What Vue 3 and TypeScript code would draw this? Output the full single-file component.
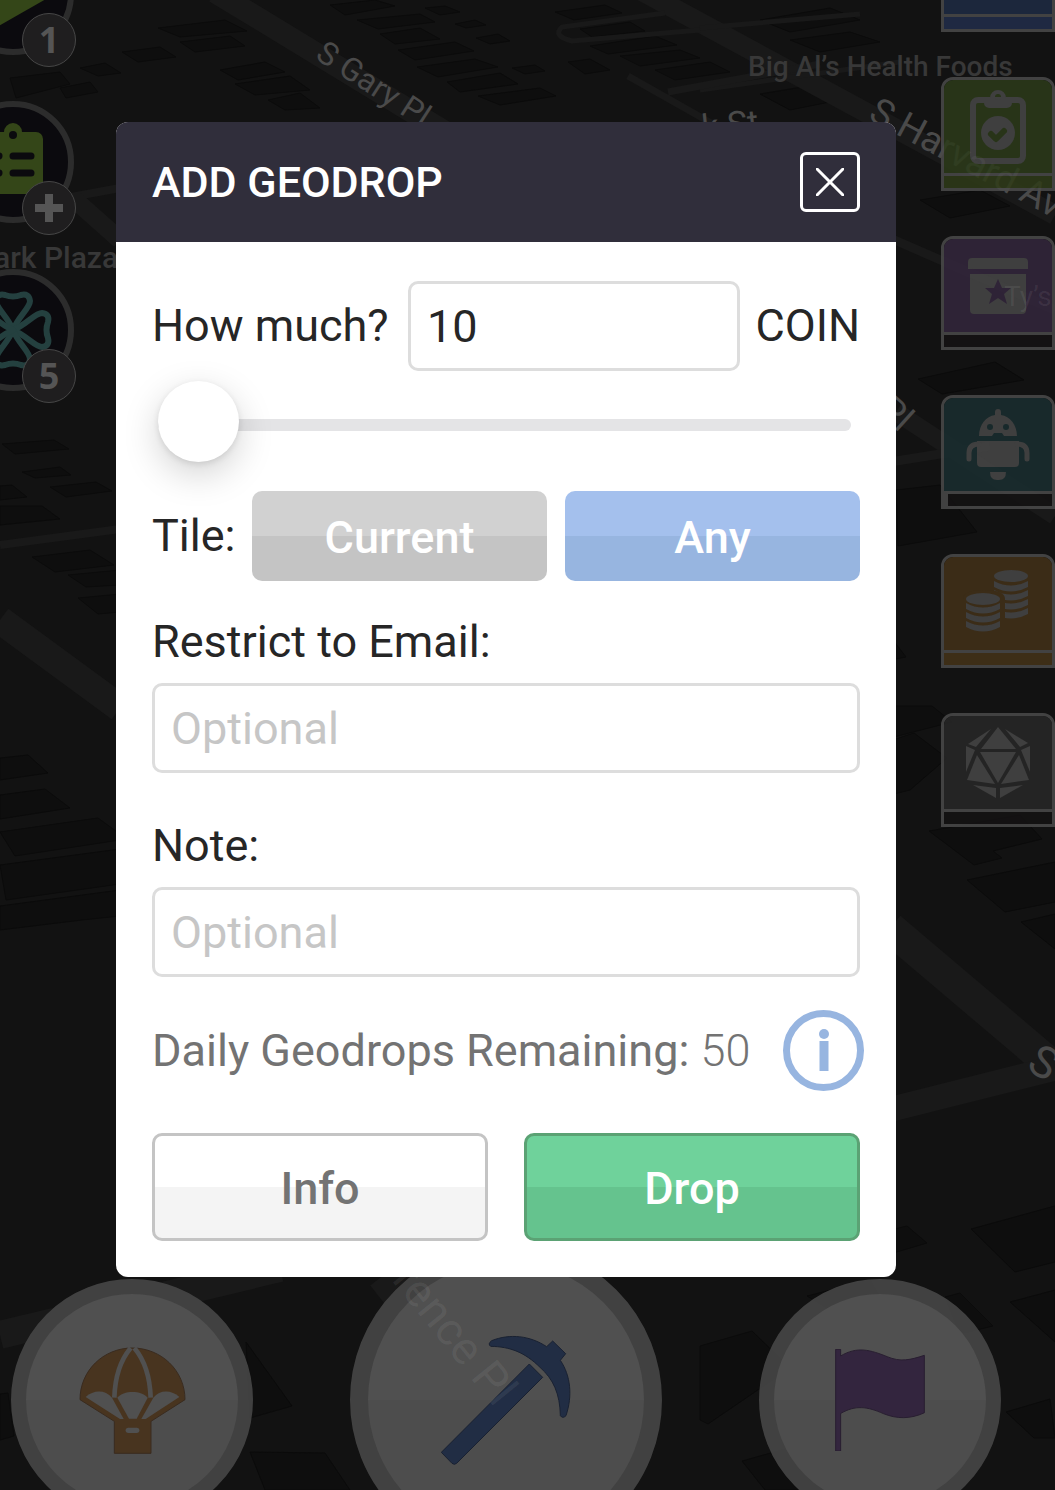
<script setup lang="ts">
import { ref } from 'vue'

interface Card {
  name: string
  color: string
  footer: string
  progress?: boolean
}

const cards: Card[] = [
  { name: 'shop', color: '#1e2b44', footer: '#222e4b' },
  { name: 'tasks', color: '#2c3b1a', footer: '#2f3b18' },
  { name: 'store', color: '#34273d', footer: '#151314' },
  { name: 'robot', color: '#1a2e30', footer: '#141213', progress: true },
  { name: 'coins', color: '#433118', footer: '#453318' },
  { name: 'dice', color: '#282828', footer: '#141213' }
]

const quests = [
  { name: 'play', badge: '1' },
  { name: 'list', badge: '+' },
  { name: 'clover', badge: '5' }
]

const blocks: string[] = [
  '158,28 225,20 247,31 180,37', '180,42 230,36 245,46 195,52', '220,70 265,62 285,72 238,80',
  '122,52 160,47 176,57 138,62', '80,68 105,63 121,73 98,76', '10,78 60,72 70,84 16,98',
  '235,84 290,76 310,90 255,95', '268,100 300,93 320,108 285,110', '60,88 90,82 98,92 66,98',
  '330,5 375,0 395,6 345,15', '357,20 420,14 435,22 378,29', '380,34 420,28 440,39 395,44',
  '398,50 455,42 474,51 415,60', '417,67 475,59 498,67 438,77', '447,82 500,73 518,84 460,92',
  '478,96 540,88 556,96 500,105', '425,8 445,6 460,12 440,15', '455,24 475,20 486,25 466,28',
  '476,38 498,34 510,41 490,44', '512,68 535,65 545,71 525,74', '555,12 605,5 622,13 574,20',
  '580,29 630,22 645,31 592,37', '590,46 655,36 677,45 608,54', '620,56 680,50 700,58 640,66',
  '655,70 710,62 730,72 675,80', '568,62 590,59 610,70 585,74', '760,20 830,8 860,20 790,32',
  '790,40 850,32 880,42 820,52', '760,94 820,84 850,98 790,110', '920,200 980,190 1010,206 950,218',
  '2,444 54,440 69,449 15,454', '22,472 60,467 71,475 35,478', '50,487 96,482 112,491 66,497',
  '0,486 12,485 27,497 0,500', '0,506 42,506 60,519 0,525', '32,557 90,550 114,565 55,572',
  '68,575 120,570 120,585 86,587', '78,598 120,594 120,612 98,614', '0,758 28,755 48,773 0,780',
  '0,795 45,789 70,808 0,819', '0,832 98,818 120,834 120,840 15,856', '0,865 120,849 120,884 6,900',
  '0,906 120,890 120,916 82,920 0,930', '929,831 1020,815 1042,839 993,851 1002,858 974,865',
  '967,880 1055,862 1055,902 1005,912', '1021,922 1055,914 1055,949', '890,1230 907,1226 927,1243 890,1254',
  '971,1229 1055,1206 1055,1262 1015,1272', '918,379 995,362 1024,380 942,394', '896,490 940,485 977,532 898,546',
  '890,636 906,657 890,660', '890,706 932,706 952,722 890,738', '890,741 914,733 947,758 910,790 890,795',
  '700,1346 752,1331 790,1368 708,1424 700,1420', '807,1296 870,1280 880,1297 830,1310',
  '945,1297 960,1293 993,1326 960,1334', '1010,1302 1055,1290 1055,1342', '1006,1412 1050,1399 1055,1438 1034,1438',
  '742,1461 800,1445 840,1490 765,1490', '246,1342 292,1406 250,1418', '250,1452 325,1453 350,1490 265,1490',
  '0,1394 8,1393 14,1436 0,1440'
]

const amount = ref('10')
const slider = ref(0)
const tile = ref('any')
const email = ref('')
const note = ref('')
const disc = (x: number, y: number): string => `M${x} ${y}q17 9 34 0v6q-17 9-34 0z`
</script>

<template>
  <div class="screen">
    <svg class="map" viewBox="0 0 1055 1490" preserveAspectRatio="xMidYMid slice" aria-hidden="true">
      <g class="blocks">
        <polygon v-for="b in blocks" :key="b" :points="b" />
      </g>
      <g class="roads">
        <path d="M215-8L450 135" stroke-width="22" />
        <path d="M640-10L1055 215" stroke-width="20" />
        <path d="M0 210L120 188M0 545L120 529" stroke-width="8" />
        <path d="M75 200L120 240" stroke-width="18" />
        <path d="M0 620L120 708" stroke-width="28" />
        <path d="M700 28L860 14M700 90L900 62" stroke-width="5" />
        <path d="M665 13L562 27Q552 36 572 41L700 30" stroke-width="5" />
        <path d="M628 76L720 128M668 92L820 64" stroke-width="7" />
        <path d="M890 238L1055 310" stroke-width="9" />
        <path d="M896 412L1055 516" stroke-width="18" />
        <path d="M890 462L990 446" stroke-width="9" />
        <path d="M890 928L1055 1068" stroke-width="32" />
        <path d="M880 1112L1055 1068" stroke-width="25" />
        <path d="M0 1335L280 1268" stroke-width="28" />
        <path d="M390 1270L570 1500" stroke-width="50" />
      </g>
      <g class="labels">
        <text transform="translate(314 58) rotate(33)" font-size="32">S Gary Pl</text>
        <text transform="translate(703 139) rotate(-6)" font-size="34">k St</text>
        <text transform="translate(867 119) rotate(28)" font-size="37">S Harvard Ave</text>
        <text transform="translate(876 412) rotate(42)" font-size="36">Pl</text>
        <text transform="translate(1025 1069) rotate(30)" font-size="44">S</text>
        <g class="places">
          <text x="748" y="76" font-size="28">Big Al’s Health Foods</text>
          <text x="-6" y="268" font-size="30">ark Plaza</text>
        </g>
      </g>
    </svg>

    <div class="quests">
      <div v-for="q in quests" :key="q.name" class="quest">
        <svg viewBox="0 0 110 110" aria-hidden="true">
          <path v-if="q.name === 'play'" d="M30 25L88 54a4 4 0 0 1 0 6L30 93Z" fill="#344618" />
          <template v-else-if="q.name === 'list'">
            <path d="M33 25H46a9 9 0 0 1 18 0H78a7 7 0 0 1 7 7V87H25V32a7 7 0 0 1 8-7Z" fill="#344618" />
            <circle cx="55" cy="28" r="4" fill="#0b0a0e" />
            <path d="M55 49H73M55 66H73M41 49h0M41 66h0" stroke="#0b0a0e" stroke-width="7" stroke-linecap="round" />
          </template>
          <g v-else fill="none" stroke="#24403f" stroke-width="6" stroke-linejoin="round">
            <path
              v-for="a in [0, 90, 180, 270]"
              :key="a"
              :transform="`rotate(${a} 55 55)`"
              d="M55 55C50 42 38 33 38 26Q39 18 47 20Q55 23 63 20Q71 18 72 26C72 33 60 42 55 55Z"
            />
          </g>
        </svg>
        <span class="badge">
          <svg v-if="q.badge === '+'" class="plus" viewBox="0 0 28 28" aria-label="Add">
            <path d="M14 0V28M0 14H28" stroke="#555" stroke-width="8" />
          </svg>
          <template v-else>{{ q.badge }}</template>
        </span>
      </div>
    </div>

    <div class="cards">
      <div v-for="c in cards" :key="c.name" class="card">
        <div class="face" :style="{ background: c.color }">
          <svg viewBox="0 0 108 93" aria-hidden="true">
            <g v-if="c.name === 'tasks'">
              <rect x="29" y="20" width="50" height="61" rx="5" fill="none" stroke="#474747" stroke-width="6" />
              <path
                fill="#474747"
                fill-rule="evenodd"
                d="M40 18H46a8 8 0 0 1 16 0H68V23a5 5 0 0 1-5 5H45a5 5 0 0 1-5-5ZM54 14a3 3 0 1 0 0 6a3 3 0 0 0 0-6Z"
              />
              <circle cx="54" cy="53" r="17" fill="#474747" />
              <path d="M47 54L52 59L60 51" fill="none" :stroke="c.color" stroke-width="6" stroke-linecap="round" stroke-linejoin="round" />
            </g>
            <g v-else-if="c.name === 'store'">
              <path d="M24 30V23a4 4 0 0 1 4-4H80a4 4 0 0 1 4 4V30ZM26 35H82V71a4 4 0 0 1-4 4H30a4 4 0 0 1-4-4Z" fill="#474747" />
              <path d="M54 40l4 9h9l-7 6 3 10-9-6-9 6 3-10-7-6h9Z" :fill="c.color" />
            </g>
            <g v-else-if="c.name === 'robot'">
              <path d="M35 38C35 27 42 18 51 17V14a3 3 0 0 1 6 0V17C66 18 73 27 73 38H60L58 35H50L48 38Z" fill="#474747" />
              <circle cx="46" cy="29" r="3" :fill="c.color" />
              <circle cx="62" cy="29" r="3" :fill="c.color" />
              <path d="M33 43H75V65a4 4 0 0 1-4 4H37a4 4 0 0 1-4-4ZM46 74H62Q62 82 55 82H53Q46 82 46 74Z" fill="#474747" />
              <path d="M35 46Q25 46 25 55V61M73 46Q83 46 83 55V61" fill="none" stroke="#474747" stroke-width="5" stroke-linecap="round" />
            </g>
            <g v-else-if="c.name === 'coins'" fill="#474747">
              <ellipse cx="67" cy="19" rx="17" ry="6" />
              <path v-for="y in [24, 33, 42, 51]" :key="y" :d="disc(50, y)" />
              <path d="M19 42Q19 33 40 33T61 42V75H19Z" :fill="c.color" />
              <ellipse cx="39" cy="42" rx="17" ry="6" />
              <path v-for="y in [46, 55, 64]" :key="y" :d="disc(22, y)" />
            </g>
            <path
              v-else-if="c.name === 'dice'"
              fill="#474747"
              d="M54 11L37 33H72ZM47 13L24 28L32 31ZM61 13L84 27L76 31ZM22 30L31 34L22 56ZM86 30L77 34L86 56ZM36 36H72L54 67ZM33 39L23 64L51 68ZM75 39L85 64L57 68ZM29 69L52 72V82ZM79 69L56 72V82Z"
            />
          </svg>
        </div>
        <div class="meter" :class="{ started: c.progress }" :style="{ background: c.footer }"></div>
      </div>
    </div>

    <nav class="dock">
      <button class="round" aria-label="Geodrop">
        <svg viewBox="237 259 321 321" width="107" height="107" aria-hidden="true">
          <path d="M240 417C240 330 310 262 397 262S555 330 555 417L453 482V578H343V482Z" fill="#4a3520" stroke="#3a2c20" stroke-width="3" />
          <g fill="#525252">
            <path d="M257 409C280 388 315 386 336 411L371 475H360Z" />
            <path d="M352 411C370 388 425 388 443 411L410 474H387Z" />
            <path d="M538 409C515 388 480 386 460 411L424 475H437Z" />
            <rect x="377" y="501" width="41" height="16" rx="8" />
          </g>
          <path d="M392 262C360 300 345 350 343 411M403 262C435 300 450 350 452 411" fill="none" stroke="#525252" stroke-width="14" />
        </svg>
      </button>
      <button class="round large" aria-label="Mine">
        <svg viewBox="303 223 390 390" width="130" height="130" aria-hidden="true">
          <g fill="#222e46" stroke="#1a2232" stroke-width="3">
            <path d="M568 310L608 350L350 608Q343 614 336 608L304 575Z" />
            <path d="M455 240C510 218 570 225 620 258L638 241L677 279L661 299C692 345 698 405 678 465Q668 475 661 465C660 400 640 355 600 320C555 275 510 258 452 257Q442 250 455 240Z" />
          </g>
        </svg>
      </button>
      <button class="round" aria-label="Flag">
        <svg viewBox="404 267 269 307" width="90" height="102" aria-hidden="true">
          <path d="M405 268H420V288C470 258 510 270 560 290C600 307 630 300 672 286V459C630 478 590 478 550 462C500 440 465 435 420 461V574H405Z" fill="#34263f" stroke="#291f31" stroke-width="3" />
        </svg>
      </button>
    </nav>

    <svg class="map glow" viewBox="0 0 1055 1490" preserveAspectRatio="xMidYMid slice" aria-hidden="true">
      <text transform="translate(391 1280) rotate(51)" font-size="46">rence Pl</text>
      <text x="1004" y="306" font-size="28">Ty’s</text>
    </svg>

    <main class="stage">
      <section class="dialog" role="dialog" aria-labelledby="dialog-title">
        <header class="head">
          <h1 id="dialog-title">ADD GEODROP</h1>
          <button class="close" aria-label="Close">
            <svg viewBox="0 0 28 28" width="28" height="28" aria-hidden="true">
              <path d="M1 1L27 27M27 1L1 27" stroke="#fff" stroke-width="3" stroke-linecap="round" />
            </svg>
          </button>
        </header>
        <form class="body" @submit.prevent>
          <div class="amount">
            <label for="amount">How much?</label>
            <input id="amount" v-model="amount" class="field" type="text" />
            <span class="unit">COIN</span>
          </div>
          <input v-model="slider" class="slider" type="range" min="0" max="100" aria-label="Amount" />
          <div class="tiles">
            <span>Tile:</span>
            <button type="button" class="tile grey" :aria-pressed="tile === 'current'" @click="tile = 'current'">Current</button>
            <button type="button" class="tile blue" :aria-pressed="tile === 'any'" @click="tile = 'any'">Any</button>
          </div>
          <div class="group">
            <label for="email">Restrict to Email:</label>
            <input id="email" v-model="email" class="field" type="text" placeholder="Optional" />
          </div>
          <div class="group note">
            <label for="note">Note:</label>
            <input id="note" v-model="note" class="field" type="text" placeholder="Optional" />
          </div>
          <div class="remaining">
            <span>Daily Geodrops Remaining: <span class="count">50</span></span>
            <button type="button" class="help" aria-label="About daily geodrops">
              <svg viewBox="0 0 81 81" width="81" height="81" aria-hidden="true">
                <circle cx="40.5" cy="40.5" r="37" fill="none" stroke="#97b5e0" stroke-width="7" />
                <circle cx="41" cy="24" r="5" fill="#97b5e0" />
                <path d="M41 31V61" stroke="#97b5e0" stroke-width="9" />
              </svg>
            </button>
          </div>
          <div class="actions">
            <button type="button" class="action info">Info</button>
            <button type="submit" class="action drop">Drop</button>
          </div>
        </form>
      </section>
    </main>
  </div>
</template>

<style>
body {
  background: #121212;
}
</style>

<style scoped>
* {
  box-sizing: border-box;
}

.screen {
  position: relative;
  min-height: 100vh;
  overflow: hidden;
  background: #121212;
  font-family: Roboto, "Liberation Sans", sans-serif;
}

button,
input {
  margin: 0;
  padding: 0;
  font: inherit;
}

svg {
  display: block;
}

.map {
  position: absolute;
  inset: 0;
  width: 100%;
  height: 100%;
}

.glow {
  fill: rgba(255, 255, 255, 0.07);
  pointer-events: none;
}

.blocks polygon {
  fill: #0e0e0e;
  stroke: #0b0b0b;
}

.roads path {
  fill: none;
  stroke: #191919;
}

.labels {
  fill: #4a4a4a;
}

.places {
  fill: #383838;
  font-weight: 500;
}

.quests {
  position: absolute;
  top: -67px;
  left: -48px;
  display: grid;
  gap: 46px;
}

.quest {
  position: relative;
  width: 122px;
  height: 122px;
  border: 6px solid #2c2c2c;
  border-radius: 50%;
  background: #0b0a0e;
}

.badge {
  position: absolute;
  right: -8px;
  bottom: -18px;
  display: flex;
  align-items: center;
  justify-content: center;
  width: 54px;
  height: 54px;
  border: 1px solid #474747;
  border-radius: 50%;
  background: #1f1e1f;
  color: #555;
  font: 700 36px/54px "Noto Sans", "Open Sans", sans-serif;
}

.plus {
  width: 28px;
}

.cards {
  position: absolute;
  top: -82px;
  right: 0;
  display: grid;
  gap: 45px;
}

.card {
  width: 114px;
  border: 3px solid #4b4b4b;
  border-radius: 12px 12px 0 0;
  overflow: hidden;
  opacity: 0.85;
}

.face {
  height: 96px;
  border-bottom: 3px solid #4b4b4b;
}

.meter {
  height: 12px;
}

.started {
  border-left: 4px solid #4b4b4b;
}

.dock {
  position: absolute;
  left: 0;
  right: 43px;
  bottom: -66px;
  display: flex;
  align-items: center;
  justify-content: center;
  gap: 97px;
}

.round {
  display: flex;
  flex: none;
  align-items: center;
  justify-content: center;
  width: 242px;
  height: 242px;
  border: 15px solid #424242;
  border-radius: 50%;
  background: linear-gradient(#525252 50%, #4f4f4f 50%);
  opacity: 0.98;
}

.large {
  width: 312px;
  height: 312px;
  border-width: 18px;
}

.stage {
  position: relative;
  display: flex;
  justify-content: center;
  padding: 122px 159px 213px 116px;
  pointer-events: none;
}

.dialog {
  width: 100%;
  max-width: 780px;
  border-radius: 12px;
  overflow: hidden;
  background: #fff;
  color: #262626;
  font-size: 45px;
  line-height: 72px;
  pointer-events: auto;
}

.head {
  display: flex;
  align-items: center;
  justify-content: space-between;
  height: 120px;
  padding: 0 36px;
  background: #302e3b;
  color: #fff;
}

h1 {
  margin: 0;
  font-size: 43px;
  font-weight: 500;
}

.close {
  display: flex;
  align-items: center;
  justify-content: center;
  width: 60px;
  height: 60px;
  border: 3px solid #fff;
  border-radius: 6px;
  background: none;
}

.body {
  padding: 39px 36px 36px;
}

.amount {
  display: grid;
  grid-template-columns: 236px 1fr 100px;
  align-items: center;
  gap: 20px;
  white-space: nowrap;
}

.unit {
  justify-self: end;
}

.field {
  display: block;
  width: 100%;
  min-width: 0;
  height: 90px;
  padding: 0 16px;
  border: 3px solid #ddd;
  border-radius: 10px;
  outline: 0;
  background: #fff;
  color: #262626;
}

.field::placeholder {
  color: #c6c6c6;
  opacity: 1;
}

.slider {
  display: block;
  width: calc(100% - 15px);
  height: 90px;
  margin: 9px 9px 21px 6px;
  appearance: none;
  background: none;
}

.slider::-webkit-slider-runnable-track {
  height: 12px;
  border-radius: 6px;
  background: #e4e4e6;
}

.slider::-webkit-slider-thumb {
  width: 81px;
  height: 81px;
  margin-top: -38px;
  border-radius: 50%;
  appearance: none;
  background: #fff;
  box-shadow: 0 2px 6px rgba(0, 0, 0, 0.1), 0 12px 36px rgba(0, 0, 0, 0.18);
}

.tiles {
  display: grid;
  grid-template-columns: 82px 1fr 1fr;
  align-items: center;
  gap: 18px;
}

.tile {
  height: 90px;
  padding-top: 3px;
  border: 0;
  border-radius: 10px;
  color: #fff;
  font-weight: 500;
}

.grey {
  background: linear-gradient(#d1d1d1 50%, #c4c4c4 50%);
}

.blue {
  background: linear-gradient(#a4c0ed 50%, #97b5e0 50%);
}

.group {
  display: grid;
  gap: 5px;
  margin-top: 25px;
}

.note {
  margin-top: 37px;
}

.remaining {
  display: flex;
  align-items: center;
  justify-content: space-between;
  margin: 33px -4px 42px 0;
  color: #737373;
}

.count {
  font-weight: 300;
}

.help {
  border: 0;
  background: none;
}

.actions {
  display: grid;
  grid-template-columns: 1fr 1fr;
  gap: 36px;
}

.action {
  height: 108px;
  padding-top: 3px;
  border: 3px solid;
  border-radius: 10px;
  font-weight: 500;
}

.info {
  border-color: #c4c4c4;
  background: linear-gradient(#fff 50%, #f4f4f4 50%);
  color: #737373;
}

.drop {
  border-color: #5ba274;
  background: linear-gradient(#6fd29b 50%, #65c38e 50%);
  color: #fff;
}
</style>
